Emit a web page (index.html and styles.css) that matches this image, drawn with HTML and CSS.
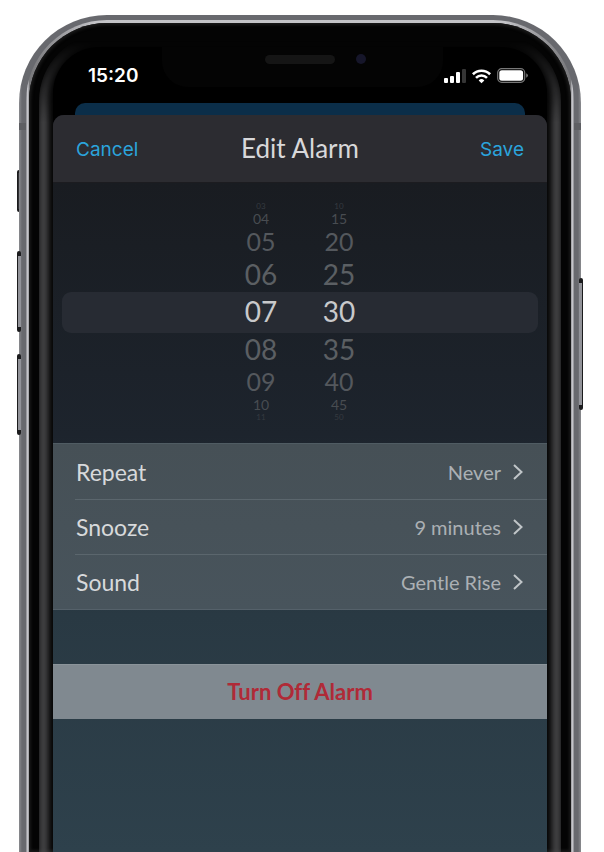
FILE: index.html
```html
<!DOCTYPE html>
<html lang="en">
<head>
<meta charset="utf-8">
<meta name="viewport" content="width=device-width, initial-scale=1">
<title>Edit Alarm</title>
<link rel="stylesheet" href="styles.css">
</head>
<body>
<div class="phone">
  <span class="key key-mute"></span>
  <span class="key key-up"></span>
  <span class="key key-down"></span>
  <span class="key key-power"></span>
  <div class="metal">
    <div class="rim">
      <div class="bezel">
        <div class="glow"></div>
        <div class="screen">
          <div class="notch"></div>
          <div class="speaker"></div>
          <div class="camera"></div>
          <div class="status">
            <time class="clock">15:20</time>
            <svg class="status-icons" width="86" height="18" viewBox="0 0 86 18" aria-hidden="true">
              <g fill="#fff">
                <rect x="1" y="11" width="4" height="5" rx="1"/>
                <rect x="7" y="9" width="4" height="7" rx="1"/>
                <rect x="13" y="5" width="4" height="11" rx="1"/>
                <rect x="19" y="2" width="4" height="14" rx="1" fill="#353535"/>
                <path d="M38.500 16.200L35.700 13.400A4 4 0 0 1 41.300 13.400Z"/>
              </g>
              <g fill="none" stroke="#fff" stroke-width="2.600">
                <path d="M29.900 7.200A12.300 12.300 0 0 1 47.100 7.200"/>
                <path d="M33 10.800A7.800 7.800 0 0 1 44 10.800"/>
              </g>
              <rect x="54.700" y="1.700" width="27" height="13.600" rx="4" fill="none" stroke="#777" stroke-width="1.200"/>
              <rect x="56.300" y="3.200" width="23.800" height="10.600" rx="2.500" fill="#fff"/>
              <path d="M83.200 6.200Q84.900 7 84.900 8.500T83.200 10.800Z" fill="#777"/>
            </svg>
          </div>
          <div class="peek"></div>
          <main class="sheet">
            <header class="bar">
              <button class="action" type="button">Cancel</button>
              <h1 class="title">Edit Alarm</h1>
              <button class="action action-end" type="button">Save</button>
            </header>
            <section class="picker" aria-label="Alarm time">
              <ul class="wheel" aria-label="Hour">
                <li class="d4">03</li><li class="d3">04</li><li class="d2">05</li><li class="d1">06</li>
                <li class="current">07</li>
                <li class="d1">08</li><li class="d2">09</li><li class="d3">10</li><li class="d4">11</li>
              </ul>
              <ul class="wheel" aria-label="Minute">
                <li class="d4">10</li><li class="d3">15</li><li class="d2">20</li><li class="d1">25</li>
                <li class="current">30</li>
                <li class="d1">35</li><li class="d2">40</li><li class="d3">45</li><li class="d4">50</li>
              </ul>
            </section>
            <div class="options">
              <button class="option" type="button"><span class="name">Repeat</span><span class="value">Never</span><svg class="chevron" width="10" height="16" viewBox="0 0 10 16"><path d="M1 1L8.500 8L1 15"/></svg></button>
              <button class="option" type="button"><span class="name">Snooze</span><span class="value">9 minutes</span><svg class="chevron" width="10" height="16" viewBox="0 0 10 16"><path d="M1 1L8.500 8L1 15"/></svg></button>
              <button class="option" type="button"><span class="name">Sound</span><span class="value">Gentle Rise</span><svg class="chevron" width="10" height="16" viewBox="0 0 10 16"><path d="M1 1L8.500 8L1 15"/></svg></button>
            </div>
            <button class="turn-off" type="button">Turn Off Alarm</button>
          </main>
        </div>
      </div>
    </div>
  </div>
</div>
</body>
</html>
```

FILE: styles.css
```css
* { box-sizing: border-box; }

body {
  margin: 0;
  height: 100vh;
  overflow: hidden;
  background: #fff;
  font-family: Lato, "Open Sans", sans-serif;
  font-variant-ligatures: none;
}

button {
  border: 0;
  padding: 0;
  background: none;
  font: inherit;
  font-variant-ligatures: none;
  color: inherit;
  cursor: pointer;
}

.phone {
  position: relative;
  height: 100%;
  padding: 15px 23px 0 19px;
}

/* Phone body, from the outside in */
.metal {
  position: relative;
  height: 100%;
  padding: 5px 7px 0;
  border-radius: 88px 88px 0 0;
  background:
    linear-gradient(#5e5f63, #5e5f63) 0 108px / 100% 7px no-repeat,
    linear-gradient(90deg, #8b8c90, #68696e 3px, #68696e calc(100% - 3px), #8b8c90);
}

.rim {
  height: 100%;
  padding: 3px 3px 0;
  border-radius: 81px 81px 0 0;
  background: linear-gradient(90deg, #85858a, #d9d9de 2px, #77777a 3px, #c4c4c8 70px, #c4c4c8 calc(100% - 70px), #77777a calc(100% - 3px), #d9d9de calc(100% - 2px), #85858a);
}

.bezel {
  position: relative;
  height: 100%;
  padding: 24px 24px 0;
  border-radius: 78px 78px 0 0;
  background: #040404;
  box-shadow: inset 0 0 3px 2px #1a1a1a;
  overflow: hidden;
}

.glow {
  position: absolute;
  inset: 10px 10px -140px;
  border: 9px solid #48484a;
  border-radius: 68px;
  filter: blur(3px);
  mask-image: linear-gradient(transparent 8px, #000 90px);
}

.key {
  position: absolute;
  width: 6px;
  border: solid #1b1b1d;
  border-width: 5px 0 5px 1px;
  border-radius: 2px;
  background: #929399;
}

.key-mute { left: 17px; top: 170px; height: 42px; border-width: 3px 1px; background: #303033; }
.key-up { left: 17px; top: 251px; height: 81px; }
.key-down { left: 17px; top: 354px; height: 81px; }
.key-power { right: 21px; top: 278px; height: 132px; border-width: 5px 1px 5px 0; }
.key-up, .key-down, .key-power { z-index: 1; width: 4px; }

/* Display */
.screen {
  position: relative;
  display: flex;
  flex-direction: column;
  height: 100%;
  border-radius: 46px 46px 0 0;
  background: #000;
  overflow: hidden;
}

.notch {
  position: absolute;
  top: 0;
  left: 22%;
  right: 21%;
  height: 40px;
  border-radius: 0 0 26px 26px;
  background: #040404;
}

.speaker {
  position: absolute;
  top: 8px;
  left: calc(50% - 35px);
  width: 70px;
  height: 9px;
  border-radius: 5px;
  background: #151515;
}

.camera {
  position: absolute;
  top: 7px;
  left: calc(50% + 56px);
  width: 10px;
  height: 10px;
  border-radius: 50%;
  background: #16162a;
}

.status {
  position: relative;
  flex: none;
  display: flex;
  align-items: center;
  justify-content: space-between;
  height: 56px;
  padding: 2px 18px 0 35px;
}

.clock {
  font: 600 19px/24px Inter, sans-serif;
  color: #fff;
}

.peek {
  flex: none;
  height: 12px;
  margin: 0 22px;
  border-radius: 10px 10px 0 0;
  background: #0b2e49;
}

.sheet {
  flex: 1;
  border-radius: 11px 11px 0 0;
  background: linear-gradient(#191c21 68px, #1d242d 320px, #293943 500px, #2e414c);
  overflow: hidden;
}

.bar {
  display: grid;
  grid-template-columns: 1fr auto 1fr;
  align-items: center;
  height: 68px;
  padding: 0 23px;
  background: #2c2c31;
  border-bottom: 1px solid #1c1c20;
}

.action {
  justify-self: start;
  padding-top: 2px;
  font: 400 19px/24px Inter, sans-serif;
  color: #2ba4dc;
}

.action-end { justify-self: end; }

.title {
  margin: 0;
  padding-bottom: 2px;
  font-size: 26px;
  font-weight: 400;
  line-height: 32px;
  color: #d8d8da;
}

/* Time picker */
.picker {
  position: relative;
  display: grid;
  grid-template-columns: 78px 78px;
  justify-content: center;
  height: 260px;
  padding-top: 18px;
}

.picker::before {
  content: "";
  position: absolute;
  top: 109px;
  left: 9px;
  right: 9px;
  height: 41px;
  border-radius: 9px;
  background: #272b33;
}

.wheel {
  position: relative;
  margin: 0;
  padding: 0;
  list-style: none;
  text-align: center;
}

.wheel .current { font-size: 28px; line-height: 41px; color: #c8c9cb; }
.wheel .d1 { font-size: 28px; line-height: 34px; color: #5b5f63; }
.wheel .d2 { font-size: 25px; line-height: 31px; color: #54585d; }
.wheel .d3 { font-size: 14px; line-height: 15px; color: #484c51; }
.wheel .d4 { font-size: 8px; line-height: 10px; color: #353a40; }

/* Settings */
.options {
  background: linear-gradient(#465056, #48545c);
  border-top: 1px solid #505c63;
  border-bottom: 1px solid #55616a;
}

.option {
  position: relative;
  display: flex;
  align-items: center;
  gap: 12px;
  width: 100%;
  height: 55px;
  padding: 0 24px 0 23px;
  text-align: left;
}

.option + .option::before {
  content: "";
  position: absolute;
  top: 0;
  left: 22px;
  right: 0;
  height: 1px;
  background: #5b666d;
}

.name { flex: 1; font-size: 23px; color: #d7d9db; }
.value { font-size: 20px; color: #abb0b4; }

.chevron {
  fill: none;
  stroke: #c0c5c8;
  stroke-width: 2;
}

.turn-off {
  display: block;
  width: 100%;
  height: 55px;
  margin-top: 54px;
  padding-bottom: 2px;
  background: #808990;
  border-top: 1px solid #8b949a;
  font-size: 22px;
  font-weight: 700;
  color: #b02a37;
}
```
